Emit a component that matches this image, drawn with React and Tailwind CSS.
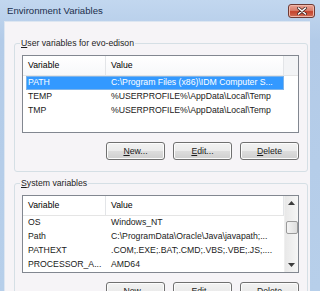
const font = { fontFamily: '"Liberation Sans", Arial, sans-serif' };

function Btn({ u, rest }) {
  return (
    <button className="w-[59px] h-[18px] rounded-[3px] border border-[#707070] bg-[linear-gradient(#f2f2f2_0%,#ebebeb_50%,#dddddd_51%,#cfcfcf_100%)] text-[8.7px] text-[#1a1a1a] leading-none shadow-[inset_0_0_0_1px_#fcfcfc]">
      <span className="underline underline-offset-1">{u}</span>
      {rest}
    </button>
  );
}

function Header() {
  return (
    <div className="flex h-[20px] border-b border-[#e5e5e5] bg-[linear-gradient(#ffffff,#f7f8fa)]">
      <div className="w-[83px] pl-[5px] flex items-center border-r border-[#e3e5e8]">Variable</div>
      <div className="w-[178px] pl-[5px] flex items-center border-r border-[#e3e5e8]">Value</div>
      <div className="flex-1 bg-[#f3f4f6]" />
    </div>
  );
}

function Row({ name, value, selected }) {
  return (
    <div
      className={`ml-[3px] w-[258px] h-[14px] flex items-center whitespace-nowrap overflow-hidden ${
        selected ? 'bg-[#3399ff] text-white outline outline-1 -outline-offset-1 outline-[#7eb4ea]' : 'text-[#1a1a1a]'
      }`}
    >
      <div className="w-[80px] pl-[2px] overflow-hidden">{name}</div>
      <div className="pl-[5px]">{value}</div>
    </div>
  );
}

function Group({ u, label, children, className = '' }) {
  return (
    <fieldset className={`w-[294px] ml-[9px] border border-[#d5dfe5] rounded-[3px] pl-[7px] pr-[8px] pt-[6px] pb-[11px] ${className}`}>
      <legend className="-ml-[2px] px-[1px] text-[8.7px] leading-[12px] text-[#1e1e1e]">
        <span className="underline underline-offset-1">{u}</span>
        {label}
      </legend>
      {children}
      <div className="flex justify-end gap-[8px] mt-[9px]">
        <Btn u="N" rest="ew..." />
        <Btn u="E" rest="dit..." />
        <Btn u="D" rest="elete" />
      </div>
    </fieldset>
  );
}

function ScrollBar() {
  return (
    <div className="w-[14px] flex flex-col items-center bg-[linear-gradient(90deg,#e8e8e8,#f6f6f6)] border-l border-[#efefef]">
      <div className="h-[14px] flex items-center justify-center">
        <svg width="7" height="4" viewBox="0 0 7 4"><path d="M3.5 0L7 4H0z" fill="#3c3c3c" /></svg>
      </div>
      <div className="mt-[11px] w-[12px] h-[13px] rounded-[2px] border border-[#9a9a9a] bg-[linear-gradient(90deg,#f4f4f4,#dedede)]" />
      <div className="flex-1" />
      <div className="h-[14px] flex items-center justify-center">
        <svg width="7" height="4" viewBox="0 0 7 4"><path d="M0 0H7L3.5 4z" fill="#3c3c3c" /></svg>
      </div>
    </div>
  );
}

export default function App() {
  return (
    <div
      className="w-[320px] h-[291px] overflow-hidden flex flex-col bg-[linear-gradient(#c2d7ef,#b3cbe8_40px,#b7cfea)]"
      style={font}
    >
      <div className="h-[21px] shrink-0 flex items-start justify-between pl-[7px] pr-[5px]">
        <div className="text-[9.6px] leading-[12px] mt-[5px] text-[#1c2f4c]">Environment Variables</div>
        <div className="mt-[4px] w-[27px] h-[14px] rounded-[3px] border border-[#6e3a34] bg-[linear-gradient(#eaa496_0%,#d9806d_45%,#c5432c_55%,#d0705a_100%)] flex items-center justify-center shadow-[inset_0_0_0_1px_#f0b7a9]">
          <svg width="10" height="8" viewBox="0 0 10 8">
            <path d="M1.5 1L8.5 7M8.5 1L1.5 7" stroke="#4a2520" strokeWidth="3" strokeLinecap="round" />
            <path d="M1.5 1L8.5 7M8.5 1L1.5 7" stroke="#ffffff" strokeWidth="1.6" strokeLinecap="round" />
          </svg>
        </div>
      </div>
      <div className="ml-[4px] w-[306px] flex-1 bg-[#f6f4f7] border-t border-l border-[#dde6f1] text-[8.7px] pt-[15px]">
        <Group u="U" label="ser variables for evo-edison">
          <div className="w-[277px] h-[78px] border border-[#828790] bg-white">
            <Header />
            <Row name="PATH" value="C:\Program Files (x86)\IDM Computer S..." selected />
            <Row name="TEMP" value="%USERPROFILE%\AppData\Local\Temp" />
            <Row name="TMP" value="%USERPROFILE%\AppData\Local\Temp" />
          </div>
        </Group>
        <Group u="S" label="ystem variables" className="mt-[5px]">
          <div className="w-[277px] h-[78px] border border-[#828790] bg-white flex">
            <div className="flex-1">
              <div className="flex h-[20px] border-b border-[#e5e5e5]">
                <div className="w-[83px] pl-[5px] flex items-center border-r border-[#e3e5e8]">Variable</div>
                <div className="flex-1 pl-[5px] flex items-center border-r border-[#e3e5e8]">Value</div>
              </div>
              <Row name="OS" value="Windows_NT" />
              <Row name="Path" value="C:\ProgramData\Oracle\Java\javapath;..." />
              <Row name="PATHEXT" value=".COM;.EXE;.BAT;.CMD;.VBS;.VBE;.JS;...." />
              <Row name="PROCESSOR_A..." value="AMD64" />
            </div>
            <ScrollBar />
          </div>
        </Group>
      </div>
    </div>
  );
}
